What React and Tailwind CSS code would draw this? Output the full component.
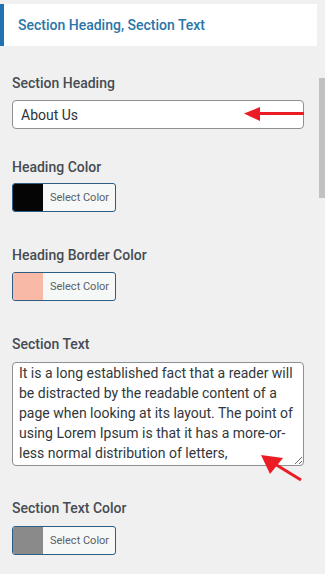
import React from 'react'

function ColorButton({ swatch }) {
  return (
    <button className="flex w-[104px] h-[29px] rounded-[3px] border border-[#2c5d85] overflow-hidden bg-[#f6f7f7]">
      <span className={`w-[30px] h-full shrink-0 ${swatch}`} />
      <span className="flex-1 flex items-center pl-[7px] text-[11px] text-[#5a6067] leading-none">Select Color</span>
    </button>
  )
}

function Label({ children, className = '' }) {
  return (
    <div className={`text-[14px] leading-[20px] font-medium text-[#474c52] ${className}`}>{children}</div>
  )
}

export default function App() {
  return (
    <div
      className="relative w-[325px] h-[574px] overflow-hidden bg-[#f0f0f1] flex"
      style={{ fontFamily: 'Roboto, "Liberation Sans", sans-serif' }}
    >
      {/* Panel */}
      <div className="w-[317px] shrink-0">
        <div className="mt-[4px] h-[42px] bg-white border-l-4 border-[#2271b1] flex items-center pl-[14px]">
          <span className="text-[14px] font-medium text-[#2a76a8]">Section Heading, Section Text</span>
        </div>

        <div className="pl-[12px] pr-[13px]">
          {/* Section heading */}
          <Label className="mt-[27px]">Section Heading</Label>
          <div className="relative mt-[7px]">
            <input
              readOnly
              value="About Us"
              className="w-full h-[29px] rounded-[4px] border border-[#8c8f94] bg-white pl-[8px] text-[14px] text-[#2c3338] outline-none"
            />
            <svg className="absolute left-[232px] top-[7px]" width="60" height="16" viewBox="0 0 60 16">
              <line x1="14" y1="6.5" x2="60" y2="6.5" stroke="#ec1c24" strokeWidth="3" />
              <polygon points="0,6.5 16,0 16,14" fill="#ec1c24" />
            </svg>
          </div>

          {/* Heading color */}
          <Label className="mt-[28px]">Heading Color</Label>
          <div className="mt-[6px]">
            <ColorButton swatch="bg-[#050505]" />
          </div>

          {/* Heading border color */}
          <Label className="mt-[33px]">Heading Border Color</Label>
          <div className="mt-[7px]">
            <ColorButton swatch="bg-[#f8b9a6]" />
          </div>

          {/* Section text */}
          <Label className="mt-[33px]">Section Text</Label>
          <div className="relative mt-[8px]">
            <textarea
              readOnly
              className="block w-full h-[104px] rounded-[4px] border border-[#8c8f94] bg-white pl-[6px] pr-[6px] pt-0 text-[14px] leading-[20px] text-[#32373c] outline-none resize-y"
              defaultValue="It is a long established fact that a reader will be distracted by the readable content of a page when looking at its layout. The point of using Lorem Ipsum is that it has a more-or-less normal distribution of letters,"
            />
            <svg className="absolute left-[248px] top-[92px]" width="44" height="30" viewBox="0 0 44 30">
              <line x1="10" y1="7" x2="41" y2="26" stroke="#ec1c24" strokeWidth="3" />
              <polygon points="1,1 23,4 10,20" fill="#ec1c24" />
            </svg>
          </div>

          {/* Section text color */}
          <Label className="mt-[32px]">Section Text Color</Label>
          <div className="mt-[8px]">
            <ColorButton swatch="bg-[#8a8a8a]" />
          </div>
        </div>
      </div>

      {/* Scrollbar */}
      <div className="flex-1 flex justify-end">
        <div className="mt-[78px] w-[6px] h-[120px] bg-[#c1c1c1]" />
      </div>
    </div>
  )
}
